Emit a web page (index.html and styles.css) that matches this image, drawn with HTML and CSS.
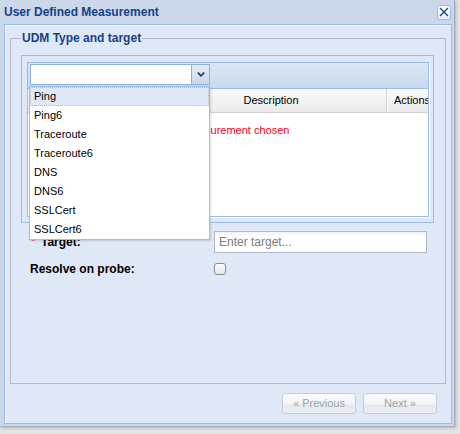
FILE: index.html
```html
<!DOCTYPE html>
<html>
<head>
<meta charset="utf-8">
<link rel="stylesheet" href="styles.css">
</head>
<body>
<div class="window">
  <div class="header">
    <span class="title">User Defined Measurement</span>
    <span class="close"><svg width="10" height="10" viewBox="0 0 10 10"><path d="M1 1L9 9M9 1L1 9" stroke="#15428b" stroke-width="1.3" fill="none"/></svg></span>
  </div>
  <div class="body">
    <fieldset class="fs">
      <legend>UDM Type and target</legend>
      <div class="gridwrap">
        <div class="grid">
          <div class="toolbar">
            <div class="combo">
              <div class="combo-input"></div>
              <div class="trigger"><svg width="8" height="5" viewBox="0 0 8 5"><polyline points="0.8,0.6 4,3.8 7.2,0.6" stroke="#27426f" stroke-width="1.8" fill="none"/></svg></div>
            </div>
          </div>
          <div class="grid-header">
            <div class="col c1"></div>
            <div class="col c2">Description</div>
            <div class="col c3">Actions</div>
          </div>
          <div class="grid-body"><div class="empty">No measurement chosen</div></div>
        </div>
      </div>
      <div class="form">
        <div class="label"><span class="req">*</span>Target:</div>
        <input class="text" type="text" placeholder="Enter target...">
        <div class="label">Resolve on probe:</div>
        <div class="cbcell"><span class="checkbox"></span></div>
      </div>
    </fieldset>
    <div class="footer">
      <div class="btn">« Previous</div>
      <div class="btn">Next »</div>
    </div>
  </div>
</div>
<div class="dropdown">
  <div class="item sel">Ping</div>
  <div class="item">Ping6</div>
  <div class="item">Traceroute</div>
  <div class="item">Traceroute6</div>
  <div class="item">DNS</div>
  <div class="item">DNS6</div>
  <div class="item">SSLCert</div>
  <div class="item">SSLCert6</div>
</div>
</body>
</html>
```
FILE: styles.css
```css
html, body { margin: 0; padding: 0; }
body {
  width: 460px; height: 434px; overflow: hidden; position: relative;
  background: #e3e3e3;
  font-family: "Liberation Sans", Arial, sans-serif; font-size: 11px; color: #000;
}
.window {
  width: 454px; height: 426px;
  background: #cad8ea;
  border-right: 1px solid #9aabc2; border-bottom: 1px solid #a4b2c4;
  box-shadow: 1px 1px 3px rgba(0,0,0,0.22);
  display: flex; flex-direction: column;
}
.header {
  height: 24px; flex: none;
  display: flex; align-items: center; justify-content: space-between;
  padding: 0 3px 0 4px;
}
.title { font-weight: bold; font-size: 12px; color: #15428b; }
.close {
  width: 12px; height: 13px; margin-top: 0;
  border: 1px solid #99bbe8; border-radius: 2px;
  background: linear-gradient(#ffffff, #e6eef9);
  display: flex; align-items: center; justify-content: center;
}
.body {
  margin: 0 2px 0 4px; height: 400px; box-sizing: border-box;
  border: 1px solid #99bbe8;
  background: #dfe8f6;
  box-shadow: inset 1px 1px 0 #f4f8fd;
  display: flex; flex-direction: column;
}
.fs {
  flex: 1; min-height: 0; min-width: 0;
  margin: 6px 5px 0 5px;
  border: 1px solid #b5b8c8;
  padding: 10px 11px 0 10px;
}
.fs legend {
  padding: 0 1px; margin: 0;
  font-weight: bold; font-size: 12px; line-height: 14px; color: #15428b;
}
.gridwrap {
  border: 1px solid #99bbe8;
  padding: 6px 4px 5px 5px;
}
.grid {
  border: 1px solid #99bbe8;
  box-shadow: 1px 1px 0 #ffffff;
  height: 153px; overflow: hidden;
  display: flex; flex-direction: column;
}
.toolbar {
  height: 24px; flex: none;
  border-bottom: 1px solid #99bbe8;
  background: linear-gradient(#dae6f5, #cad9ee);
  padding: 1px 0 0 2px; box-sizing: content-box;
}
.combo {
  width: 180px; height: 21px; display: flex;
}
.combo-input {
  flex: 1; border: 1px solid #8fb1da; border-right: none; background: #fff;
}
.trigger {
  width: 17px; border: 1px solid #8fb1da;
  background: linear-gradient(#e4ecf7, #c9d8ec);
  display: flex; align-items: center; justify-content: center;
}
.grid-header {
  height: 23px; flex: none; display: flex;
  border-bottom: 1px solid #d0d0d0;
  background: linear-gradient(#fafafa, #eaeaea);
}
.col {
  line-height: 23px; white-space: nowrap; overflow: hidden;
  border-right: 1px solid #d0d0d0; box-shadow: 1px 0 0 #fff;
}
.c1 { width: 127px; flex: none; }
.c2 { width: 230px; flex: none; text-align: center; }
.c3 { flex: 1; min-width: 0; border-right: none; padding-left: 7px; }
.grid-body { flex: 1; background: #fff; }
.empty { text-align: center; color: #f80026; padding-top: 10px; line-height: 14px; }
.form {
  display: grid; grid-template-columns: 184px 213px;
  row-gap: 5px; align-items: center;
  margin-top: 8px; padding-left: 9px;
}
.label { font-weight: bold; font-size: 12px; }
.req { display: inline-block; width: 11px; color: #e00; font-weight: normal; font-size: 11px; position: relative; top: -1px; padding-left: 1px; box-sizing: border-box; }
.text {
  box-sizing: border-box; width: 213px; height: 22px; margin: 0;
  border: 1px solid #b5b8c8;
  background: linear-gradient(#f2f2f2, #ffffff 5px);
  padding: 0 4px; font-family: "Liberation Sans", Arial, sans-serif; font-size: 12px;
  outline: none;
}
.text::placeholder { color: #7d7d7d; }
.cbcell { height: 22px; display: flex; align-items: center; }
.checkbox {
  width: 10px; height: 10px; border: 1px solid #8c8c8c; border-radius: 3px;
  background: linear-gradient(#fdfdfd, #e6e6e6);
}
.footer {
  flex: none; display: flex; justify-content: flex-end; gap: 7px;
  padding: 9px 14px 9px 0;
}
.btn {
  box-sizing: border-box; width: 74px; height: 21px;
  border: 1px solid #c5cdd6; border-radius: 3px;
  background: linear-gradient(#fbfcfd 0%, #f1f3f6 55%, #e4e8ed 56%, #eaedf1 100%);
  color: #9aa2ac; text-align: center; line-height: 19px; font-size: 11px;
}
.dropdown {
  position: absolute; left: 29px; top: 86px;
  width: 179px; border: 1px solid #98c0f4; background: #fff;
  box-shadow: 1px 1px 2px rgba(0,0,0,0.15);
}
.item {
  height: 19px; box-sizing: border-box; line-height: 17px;
  border: 1px solid transparent; padding: 0 3px; white-space: nowrap;
}
.item.sel { background: #dfe8f6; border: 1px dotted #a3bae9; }
```
